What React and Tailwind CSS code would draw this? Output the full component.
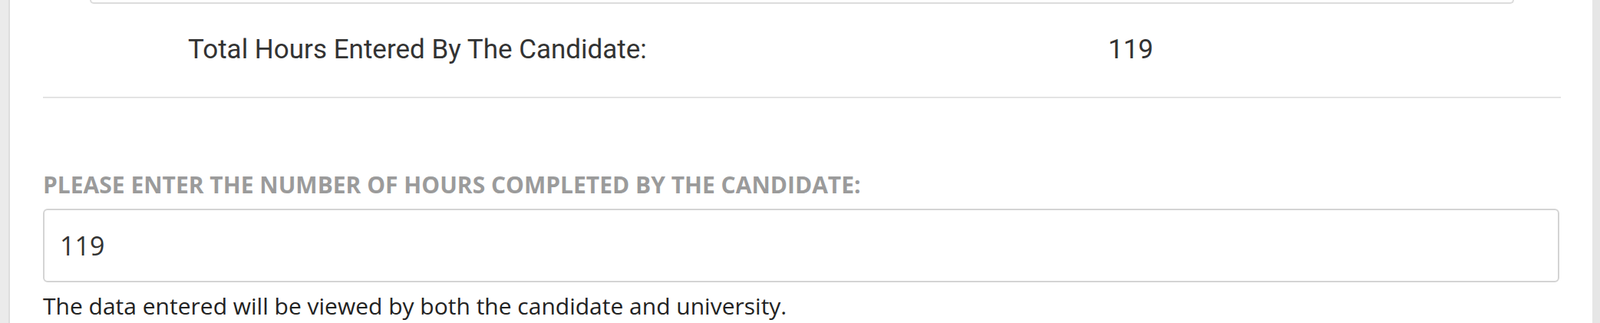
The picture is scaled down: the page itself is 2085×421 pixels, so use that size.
import React from 'react';

const App = () => {
  return (
    <div className="flex w-[2085px] h-[421px] bg-white overflow-hidden">
      <div className="w-[13px] shrink-0 bg-[#ebebeb] border-r-[2px] border-[#dedede]"></div>
      <main className="flex-1 pl-[43px] pr-[41px]">
        {/* bottom of the card above */}
        <div className="mx-[61px] h-[5px] border-b-[2px] border-x-[2px] border-[#dcdcdc] rounded-b-[8px]"></div>
        <div className="grid grid-cols-[1388px_1fr] items-center h-[123px] border-b-[2px] border-[#e3e3e3] font-['Roboto',sans-serif] text-[35px] text-[#333]">
          <span className="pl-[189px]">Total Hours Entered By The Candidate:</span>
          <span>119</span>
        </div>
        <div className="pt-[95px] font-['Open_Sans',sans-serif]">
          <label className="block text-[30px] leading-[36px] font-bold uppercase text-[#9b9b9b]">
            Please enter the number of hours completed by the candidate:
          </label>
          <input
            type="text"
            defaultValue="119"
            className="mt-[13px] block w-[calc(100%-2px)] h-[96px] px-[20px] border-[2px] border-[#d4d4d4] rounded-[6px] text-[34px] text-[#333] outline-none"
          />
          <p className="mt-[13px] text-[30px] leading-[36px] text-[#222]">
            The data entered will be viewed by both the candidate and university.
          </p>
        </div>
      </main>
      <div className="w-[10px] shrink-0 bg-[#e6e6e6]"></div>
    </div>
  );
};

export default App;
